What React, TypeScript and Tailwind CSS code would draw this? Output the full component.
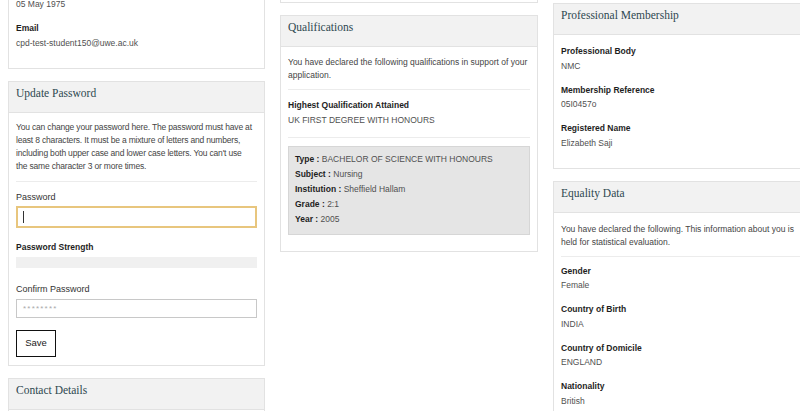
import React from "react";

const sans = "font-['Liberation_Sans',Arial,sans-serif]";

function Panel({ title, children, bodyClass = "pt-2 pb-2" }: { title?: string; children: React.ReactNode; bodyClass?: string }) {
  return (
    <div className="border border-[#e2e2e2] bg-white">
      {title && (
        <div className="h-[31px] border-b border-[#e2e2e2] bg-[#f2f2f2] px-[7px] pt-[3px] font-['Liberation_Serif',Georgia,serif] text-[11.5px] leading-[16px] text-[#2e4850]">
          {title}
        </div>
      )}
      <div className={`px-[7px] ${bodyClass}`}>{children}</div>
    </div>
  );
}

function Field({ label, value }: { label: string; value: string }) {
  return (
    <div className="mb-[9.5px]">
      <div className="text-[8.5px] font-bold leading-[14.5px] text-[#1e1e1e]">{label}</div>
      <div className="text-[8.5px] leading-[14.5px] text-[#505050]">{value}</div>
    </div>
  );
}

function Line({ k, v }: { k: string; v: string }) {
  return (
    <div className="text-[8.5px] leading-[15px] text-[#505050]">
      <span className="font-bold text-[#1e1e1e]">{k} : </span>
      {v}
    </div>
  );
}

export default function App() {
  return (
    <div className={`h-[411px] w-[800px] overflow-hidden bg-white ${sans}`}>
      <div className="flex items-start gap-[15px] pl-2">
        {/* Left column */}
        <div className="-mt-[12px] flex w-[257px] shrink-0 flex-col gap-3">
          <Panel>
            <div className="mb-[9.5px] text-[8.5px] leading-[14.5px] text-[#505050]">05 May 1975</div>
            <Field label="Email" value="cpd-test-student150@uwe.ac.uk" />
          </Panel>
          <Panel title="Update Password" bodyClass="pt-2 pb-2">
            <p className="whitespace-nowrap border-b border-[#ececec] pb-2 text-[8.5px] leading-[13px] tracking-[-0.18px] text-[#454545]">
              You can change your password here. The password must have at
              <br />
              least 8 characters. It must be a mixture of letters and numbers,
              <br />
              including both upper case and lower case letters. You can't use
              <br />
              the same character 3 or more times.
            </p>
            <div className="mt-2 text-[9px] leading-[14px] text-[#333]">Password</div>
            <div className="relative mt-[2px] h-[22px] border-2 border-[#e8c67e] bg-white">
              <span className="absolute left-[5px] top-[3px] h-[12px] w-px bg-[#333]" />
            </div>
            <div className="mt-3 text-[8.5px] font-bold leading-[14.5px] text-[#1e1e1e]">Password Strength</div>
            <div className="mt-[3px] h-[11px] bg-[#f0f0f0]" />
            <div className="mt-[14px] text-[9px] leading-[14px] text-[#333]">Confirm Password</div>
            <div className="mt-[3px] flex h-[19px] items-center border border-[#c8c8c8] px-[6px] text-[8px] leading-none tracking-[1.2px] text-[#aaa]">
              ********
            </div>
            <button className="mt-3 flex h-[27px] w-[40px] items-center justify-center border-[1.5px] border-[#111] bg-white text-[9.5px] text-[#222]">
              Save
            </button>
          </Panel>
          <Panel title="Contact Details">
            <div className="h-[60px]" />
          </Panel>
        </div>

        {/* Middle column */}
        <div className="flex w-[258px] shrink-0 flex-col gap-3">
          <div className="h-[3px] border-x border-b border-[#e2e2e2]" />
          <Panel title="Qualifications" bodyClass="pt-[9px] pb-2">
            <p className="border-b border-[#ececec] pb-[7px] text-[8.5px] leading-[13px] text-[#454545]">
              You have declared the following qualifications in support of your application.
            </p>
            <div className="mt-2 border-b border-[#ececec]">
              <Field label="Highest Qualification Attained" value="UK FIRST DEGREE WITH HONOURS" />
            </div>
            <div className="mb-2 mt-2 border border-[#d6d6d6] bg-[#e5e5e5] px-[6px] pb-[7px] pt-[5px]">
              <Line k="Type" v="BACHELOR OF SCIENCE WITH HONOURS" />
              <Line k="Subject" v="Nursing" />
              <Line k="Institution" v="Sheffield Hallam" />
              <Line k="Grade" v="2:1" />
              <Line k="Year" v="2005" />
            </div>
          </Panel>
        </div>

        {/* Right column */}
        <div className="mt-[3px] flex w-[258px] shrink-0 flex-col gap-3">
          <Panel title="Professional Membership" bodyClass="pt-[9px] pb-2">
            <Field label="Professional Body" value="NMC" />
            <Field label="Membership Reference" value="05I0457o" />
            <Field label="Registered Name" value="Elizabeth Saji" />
          </Panel>
          <Panel title="Equality Data" bodyClass="pt-[10px] pb-2">
            <p className="border-b border-[#ececec] pb-[6px] text-[8.5px] leading-[13.5px] text-[#454545]">
              You have declared the following. This information about you is held for statistical evaluation.
            </p>
            <div className="mt-[7px]">
              <Field label="Gender" value="Female" />
              <Field label="Country of Birth" value="INDIA" />
              <Field label="Country of Domicile" value="ENGLAND" />
              <Field label="Nationality" value="British" />
            </div>
          </Panel>
        </div>
      </div>
    </div>
  );
}
